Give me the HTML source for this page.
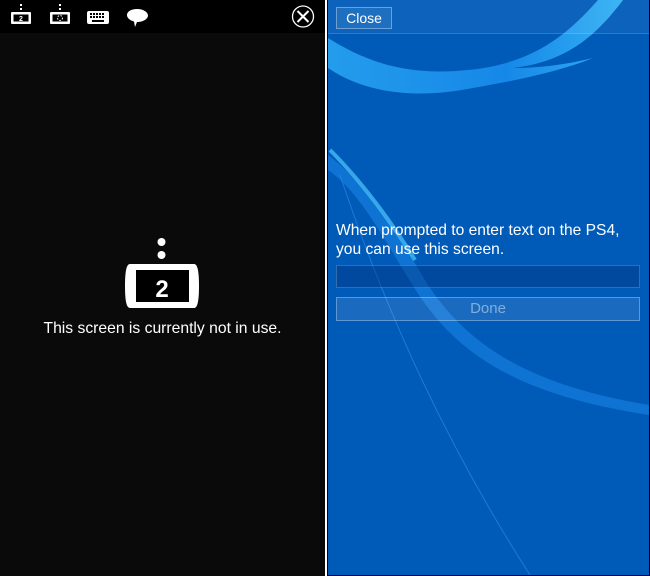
<!DOCTYPE html>
<html><head><meta charset="utf-8"><style>
*{margin:0;padding:0;box-sizing:border-box}
body{width:650px;height:576px;background:#000;position:relative;overflow:hidden;font-family:"Liberation Sans",sans-serif}
#l{position:absolute;left:0;top:0;width:325px;height:576px;background:#0a0a0a}
#bar{position:absolute;left:0;top:0;width:325px;height:33px;background:#000}
#div{position:absolute;left:325px;top:0;width:2px;height:576px;background:#fff}
#r{position:absolute;left:328px;top:0;width:321px;height:575px;background:#005bb8;overflow:hidden}
.t{position:absolute;color:#fff}
</style></head><body>
<div id="l"></div>
<div id="bar">
<svg width="325" height="33" viewBox="0 0 325 33">
 <g fill="#fff">
  <rect x="20" y="4" width="2" height="2"/><rect x="20" y="8" width="2" height="2"/>
  <rect x="11" y="12" width="20" height="12" rx="1"/>
  <rect x="13.5" y="14.5" width="15" height="7" fill="#000"/>
  <text x="21" y="21" font-size="7" font-family="Liberation Sans" text-anchor="middle" font-weight="bold">2</text>
  <rect x="59" y="4" width="2" height="2"/><rect x="59" y="8" width="2" height="2"/>
  <rect x="50" y="12" width="20" height="12" rx="1"/>
  <rect x="52.5" y="14.5" width="15" height="7" fill="#000"/>
  <circle cx="60" cy="18" r="2.5" fill="none" stroke="#fff" stroke-dasharray="1.5 1.5"/>
  <path d="M89 11h18a2 2 0 0 1 2 2v9a2 2 0 0 1-2 2h-18a2 2 0 0 1-2-2v-9a2 2 0 0 1 2-2z"/>
  <g fill="#000"><rect x="90" y="13" width="2" height="2"/><rect x="93" y="13" width="2" height="2"/><rect x="96" y="13" width="2" height="2"/><rect x="99" y="13" width="2" height="2"/><rect x="102" y="13" width="2" height="2"/><rect x="90" y="16" width="2" height="2"/><rect x="93" y="16" width="2" height="2"/><rect x="96" y="16" width="2" height="2"/><rect x="99" y="16" width="2" height="2"/><rect x="102" y="16" width="2" height="2"/><rect x="92" y="20" width="12" height="2"/></g>
  <path d="M137 9c6 0 11 3 11 6.5s-5 6.5-11 6.5l-2 5-1-5.5c-4-1-7-3.5-7-6.5 0-3.5 4-6 10-6z"/>
 </g>
 <circle cx="303" cy="16.5" r="10.5" fill="none" stroke="#fff" stroke-width="1.3"/>
 <path d="M297.5 11l11 11M308.5 11l-11 11" stroke="#fff" stroke-width="2"/>
</svg>
</div>
<svg style="position:absolute;left:110px;top:232px" width="110" height="80" viewBox="110 232 110 80">
 <circle cx="161.5" cy="242" r="4" fill="#fff"/><circle cx="161.5" cy="255" r="4" fill="#fff"/>
 <path d="M130 264h64c3 0 5 5 5 22s-2 22-5 22h-64c-3 0-5-5-5-22s2-22 5-22z" fill="#fff"/>
 <rect x="136" y="270" width="53" height="32" fill="#000"/>
 <text x="162" y="297" font-size="24" fill="#fff" font-weight="bold" text-anchor="middle" font-family="Liberation Sans">2</text>
</svg>
<div class="t" style="left:0;width:325px;top:320px;text-align:center;font-size:15.7px">This screen is currently not in use.</div>
<div id="div"></div>
<div id="r">
<svg width="321" height="575" viewBox="328 0 321 575" style="position:absolute;left:0;top:0">
 <defs>
  <linearGradient id="g1" x1="0" x2="1"><stop offset="0" stop-color="#2aa8f5"/><stop offset=".6" stop-color="#1a8ff0"/><stop offset="1" stop-color="#3cc0ff"/></linearGradient>
 </defs>
 <path d="M328 38c40 25 80 38 140 32 60-6 95-30 130-70h25c-30 40-60 62-110 68 30 0 55-4 80-10-35 14-75 22-120 30-60 12-110 4-145-20z" fill="url(#g1)" opacity=".85"/>
 <path d="M328 155c40 30 70 80 100 130 40 60 100 100 221 120v10c-130-20-190-60-230-120-30-45-55-100-91-125z" fill="#1e8cf0" opacity=".5"/>
 <path d="M330 150c30 30 60 70 85 110" stroke="#4fc8ff" stroke-width="4" fill="none" opacity=".7"/>
 <path d="M340 175c40 120 100 260 190 400" stroke="#2c90f0" stroke-width="1" fill="none" opacity=".6"/>
 <rect x="328" y="0" width="321" height="34" fill="#fff" opacity=".05"/>
 <rect x="328" y="33" width="321" height="1" fill="#fff" opacity=".15"/>
</svg>
<div style="position:absolute;left:8px;top:7px;width:56px;height:22px;border:1px solid rgba(255,255,255,.35);background:rgba(255,255,255,.08);color:#fff;font-size:14px;text-align:center;line-height:20px">Close</div>
<div class="t" style="left:8px;top:221px;font-size:15.6px;line-height:19px">When prompted to enter text on the PS4,<br>you can use this screen.</div>
<div style="position:absolute;left:8px;top:265px;width:304px;height:23px;background:rgba(0,40,110,.35);border:1px solid rgba(255,255,255,.2)"></div>
<div style="position:absolute;left:8px;top:297px;width:304px;height:24px;background:rgba(255,255,255,.1);border:1px solid rgba(255,255,255,.3);color:rgba(255,255,255,.45);font-size:15px;text-align:center;line-height:22px">Done</div>
</div>
</body></html>
